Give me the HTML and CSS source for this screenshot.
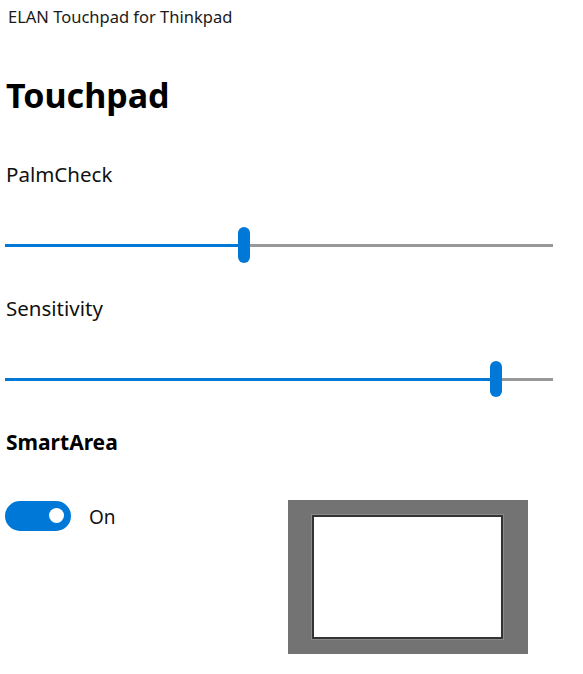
FILE: index.html
```html
<!DOCTYPE html>
<html lang="en">
<head>
<meta charset="utf-8">
<title>ELAN Touchpad for Thinkpad</title>
<link rel="stylesheet" href="styles.css">
</head>
<body>
<div class="page">
  <div class="app-title">ELAN Touchpad for Thinkpad</div>
  <h1 class="heading">Touchpad</h1>

  <div class="label label-palm">PalmCheck</div>
  <div class="slider slider-palm">
    <div class="fill" style="width:233px"></div>
    <div class="thumb"></div>
    <div class="rest"></div>
  </div>

  <div class="label label-sens">Sensitivity</div>
  <div class="slider slider-sens">
    <div class="fill" style="width:485px"></div>
    <div class="thumb"></div>
    <div class="rest"></div>
  </div>

  <div class="subheading">SmartArea</div>

  <div class="smart-row">
    <div class="toggle-group">
      <div class="toggle"><div class="knob"></div></div>
      <span class="toggle-label">On</span>
    </div>
    <div class="pad-frame">
      <div class="pad-area"></div>
    </div>
  </div>
</div>
</body>
</html>
```

FILE: styles.css
```css
html, body {
  margin: 0;
  padding: 0;
  background: #ffffff;
}

body {
  font-family: "Noto Sans", "Open Sans", sans-serif;
  color: #000000;
}

.page {
  width: 583px;
  height: 674px;
  padding-left: 5px;
  box-sizing: border-box;
  overflow: hidden;
}

.app-title {
  margin-top: 7px;
  margin-left: 3px;
  font-size: 16.5px;
  line-height: 20px;
  color: #1a1a1a;
}

.heading {
  margin: 46px 0 0 1px;
  font-size: 34px;
  line-height: 44px;
  font-weight: 700;
}

.label {
  font-size: 20.5px;
  line-height: 28px;
  color: #111111;
  margin-left: 1px;
}

.label-palm {
  margin-top: 43px;
}

.label-sens {
  margin-top: 31px;
}

.slider {
  display: flex;
  align-items: center;
  width: 548px;
  height: 36px;
}

.slider-palm {
  margin-top: 39px;
}

.slider-sens {
  margin-top: 39px;
}

.fill {
  height: 3px;
  background: #0078d7;
}

.thumb {
  width: 12px;
  height: 36px;
  border-radius: 6px;
  background: #0078d7;
}

.rest {
  flex: 1;
  height: 3px;
  background: #999999;
}

.subheading {
  margin-top: 33px;
  margin-left: 1px;
  font-size: 21px;
  line-height: 24px;
  font-weight: 700;
}

.smart-row {
  display: flex;
  align-items: flex-start;
  margin-top: 46px;
}

.toggle-group {
  display: flex;
  align-items: center;
  width: 283px;
}

.toggle {
  width: 66px;
  height: 30px;
  border-radius: 15px;
  background: #0078d7;
  display: flex;
  align-items: center;
  justify-content: flex-end;
  padding-right: 7px;
  box-sizing: border-box;
}

.knob {
  width: 15px;
  height: 15px;
  border-radius: 50%;
  background: #ffffff;
}

.toggle-label {
  margin-left: 18px;
  margin-top: 3px;
  font-size: 19px;
  line-height: 28px;
  color: #111111;
}

.pad-frame {
  width: 240px;
  height: 154px;
  background: #737373;
  padding: 15px 25px 15px 24px;
  box-sizing: border-box;
  display: flex;
}

.pad-area {
  flex: 1;
  background: #ffffff;
  border: 2px solid #333333;
  box-shadow: 0 0 0 1px #8a8a8a;
}
```
